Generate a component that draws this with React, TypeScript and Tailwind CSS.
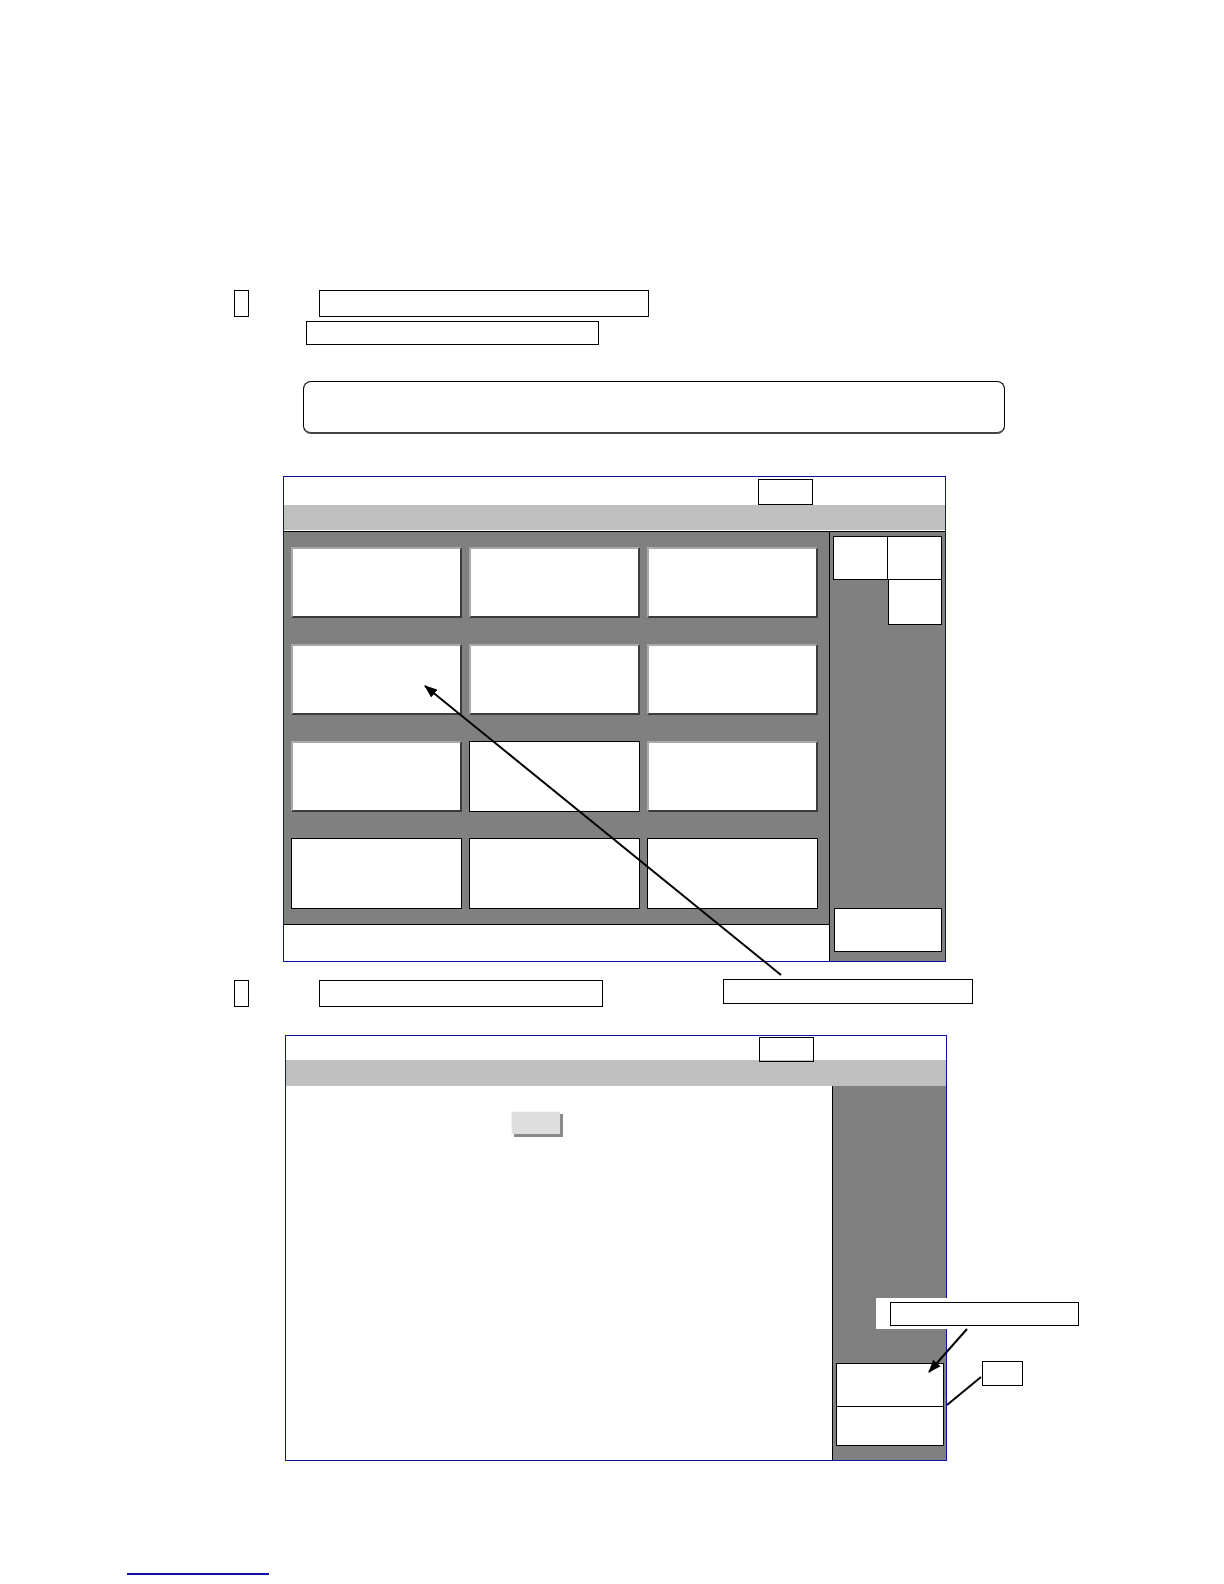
import React from "react";

// 3D raised button as in the dialog grid
const Raised: React.FC = () => (
  <div className="h-[71px] bg-white border-2 border-t-[#a9a9a9] border-l-[#a9a9a9] border-r-[#3c3c3c] border-b-[#3c3c3c]" />
);

const Flat: React.FC = () => <div className="h-[71px] bg-white border-[1.5px] border-black" />;

const grid: ("r" | "f")[] = ["r", "r", "r", "r", "r", "r", "r", "f", "r", "f", "f", "f"];

const Arrows: React.FC = () => (
  <svg className="absolute left-0 top-0 pointer-events-none" width={1224} height={1584}>
    <defs>
      <marker id="head" markerWidth="13" markerHeight="10" refX="12" refY="5" orient="auto" markerUnits="userSpaceOnUse">
        <path d="M0,0 L13,5 L0,10 Z" fill="#000" />
      </marker>
    </defs>
    <line x1={781} y1={975} x2={425} y2={686} stroke="#000" strokeWidth={2} markerEnd="url(#head)" />
    <line x1={967} y1={1329} x2={929} y2={1372} stroke="#000" strokeWidth={2} markerEnd="url(#head)" />
    <line x1={981} y1={1377} x2={947} y2={1405} stroke="#000" strokeWidth={2} />
  </svg>
);

export default function App() {
  return (
    <div className="relative w-[1224px] min-h-[1584px] bg-white font-['Liberation_Sans',sans-serif] pt-[290px]">
      {/* heading line */}
      <div className="flex">
        <div className="ml-[234px] w-[15px] h-[27px] border-[1.5px] border-black" />
        <div className="ml-[70px] w-[330px] h-[27px] border-[1.5px] border-black" />
      </div>
      <div className="mt-[4px] ml-[306px] w-[293px] h-[24px] border-[1.5px] border-black" />

      {/* note box */}
      <div className="mt-[36px] ml-[303px] w-[702px] h-[53px] rounded-lg border-[1.5px] border-black border-b-2 border-b-[#444]" />

      {/* screen 1 */}
      <div className="mt-[42px] ml-[283px] w-[663px] h-[486px] border border-[#1010a0] flex flex-col">
        <div className="h-[28px] shrink-0 bg-white">
          <div className="ml-[474px] mt-[2px] w-[55px] h-[26px] border-[1.5px] border-black" />
        </div>
        <div className="h-[26px] shrink-0 bg-[#c0c0c0] border-b border-white" />
        <div className="h-px shrink-0 bg-black" />
        <div className="flex flex-1">
          <div className="w-[545px] flex flex-col">
            <div className="h-[392px] bg-[#808080] pl-[7px] pt-[15px]">
              <div className="grid grid-cols-[171px_171px_171px] gap-x-[7px] gap-y-[26px]">
                {grid.map((g, i) => (g === "r" ? <Raised key={i} /> : <Flat key={i} />))}
              </div>
            </div>
            <div className="flex-1 bg-white border-t border-black" />
          </div>
          <div className="flex-1 bg-[#808080] border-l border-black flex flex-col pt-[4px] pl-[3px]">
            <div className="grid grid-cols-[55px_54px] grid-rows-[44px_45px]">
              <div className="bg-white border-[1.5px] border-black" />
              <div className="bg-white border-[1.5px] border-l-0 border-black" />
              <div />
              <div className="bg-white border-[1.5px] border-t-0 border-black" />
            </div>
            <div className="mt-auto mb-[9px] ml-px w-[108px] h-[44px] bg-white border-[1.5px] border-black" />
          </div>
        </div>
      </div>

      {/* caption line */}
      <div className="flex items-start mt-[18px]">
        <div className="ml-[234px] w-[15px] h-[27px] border-[1.5px] border-black" />
        <div className="ml-[70px] w-[284px] h-[27px] border-[1.5px] border-black" />
        <div className="ml-[120px] -mt-px w-[250px] h-[25px] border-[1.5px] border-black" />
      </div>

      {/* screen 2 */}
      <div className="mt-[28px] ml-[285px] w-[662px] h-[426px] border border-[#1010a0] flex flex-col">
        <div className="h-[24px] shrink-0 bg-white">
          <div className="ml-[473px] mt-[1px] w-[55px] h-[25px] border-[1.5px] border-black relative" />
        </div>
        <div className="h-[26px] shrink-0 bg-[#c0c0c0]" />
        <div className="flex flex-1">
          <div className="w-[546px] bg-white pt-[25px] pl-[225px]">
            <div className="w-[49px] h-[23px] bg-[#dedede] border-t border-l border-[#f4f4f4] shadow-[3px_3px_0_#8a8a8a]" />
          </div>
          <div className="flex-1 bg-[#808080] border-l border-black flex flex-col pl-[3px]">
            <div className="mt-auto mb-[14px] w-[108px] border-[1.5px] border-black bg-white">
              <div className="h-[43px] border-b-[1.5px] border-black" />
              <div className="h-[38px]" />
            </div>
          </div>
        </div>
      </div>

      {/* footnote rule */}
      <div className="mt-[112px] ml-[127px] w-[142px] h-[2px] bg-[#1010a0]" />

      {/* callouts over screen 2 */}
      <div className="absolute left-[876px] top-[1298px] w-[204px] h-[31px] bg-white pl-[14px] pt-[4px]">
        <div className="w-[189px] h-[24px] border-[1.5px] border-black" />
      </div>
      <div className="absolute left-[982px] top-[1361px] w-[41px] h-[25px] border-[1.5px] border-black bg-white" />

      <Arrows />
    </div>
  );
}
